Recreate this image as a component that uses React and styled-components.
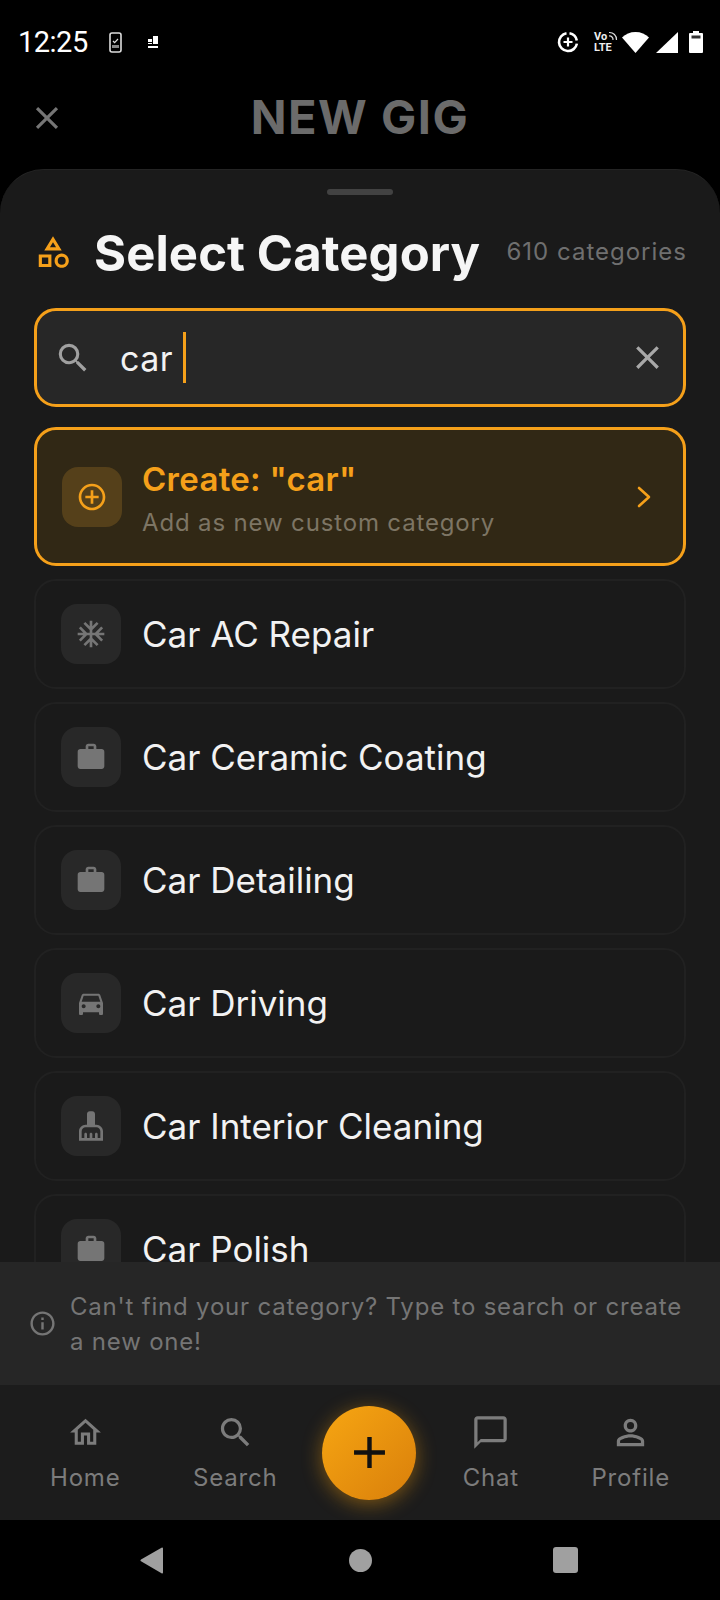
import React from 'react';
import styled, { createGlobalStyle } from 'styled-components';
import {
  MdClose,
  MdSearch,
  MdOutlineCategory,
  MdAddCircleOutline,
  MdAcUnit,
  MdWork,
  MdDirectionsCar,
  MdCleaningServices,
  MdInfoOutline,
  MdOutlineHome,
  MdChatBubbleOutline,
  MdPersonOutline,
  MdAdd,
} from 'react-icons/md';

const GlobalStyle = createGlobalStyle`
  html, body {
    margin: 0;
    padding: 0;
    background: #000;
  }
  * {
    box-sizing: border-box;
  }
`;

const ORANGE = '#f5a01a';

const Screen = styled.div`
  width: 720px;
  height: 1600px;
  display: flex;
  flex-direction: column;
  background: #000;
  font-family: Inter, 'Liberation Sans', sans-serif;
  overflow: hidden;
`;

// Android status bar
const StatusBar = styled.div`
  height: 84px;
  flex: none;
  display: flex;
  align-items: center;
  padding: 0 17px 0 18px;
  color: #fff;
`;

const Clock = styled.span`
  font-family: Roboto, sans-serif;
  font-size: 29px;
  letter-spacing: -0.5px;
  line-height: 29px;
  width: 91px;
`;

const StatusLeft = styled.div`
  display: flex;
  align-items: center;
  gap: 26px;
  flex: 1;
`;

const StatusRight = styled.div`
  display: flex;
  align-items: center;
  gap: 8px;
`;

const VoLte = styled.div`
  width: 24px;
  margin: 0 -4px 0 7px;
  display: flex;
  flex-direction: column;
  font-family: Roboto, sans-serif;
  font-weight: 700;
  font-size: 11px;
  line-height: 11px;
  position: relative;
  color: #eee;
`;

const VoWaves = styled.svg`
  position: absolute;
  right: 0;
  top: 0;
`;

const WifiSlot = styled.span`
  display: flex;
  margin-right: -1px;
`;

const BatterySlot = styled.span`
  display: flex;
  margin-left: 3px;
`;

// Dimmed page header behind the sheet
const Header = styled.div`
  height: 85px;
  flex: none;
  display: flex;
  align-items: center;
  position: relative;
  justify-content: center;
  color: #6b6b6b;
  padding-bottom: 20px;
`;

const HeaderClose = styled.div`
  position: absolute;
  left: 28px;
  top: 15px;
  display: flex;
  color: #757575;
`;

const HeaderTitle = styled.h1`
  margin: 0;
  font-size: 47px;
  font-weight: 700;
  letter-spacing: 1.5px;
  line-height: 56px;
`;

const Sheet = styled.div`
  flex: 1;
  min-height: 0;
  display: flex;
  flex-direction: column;
  background: #1a1a1a;
  border-radius: 44px 44px 0 0;
  border-top: 1px solid #242424;
  overflow: hidden;
`;

const Handle = styled.div`
  width: 66px;
  height: 6px;
  border-radius: 3px;
  background: #424242;
  margin: 19px auto 0;
  flex: none;
`;

const Heading = styled.div`
  flex: none;
  height: 113px;
  padding: 0 33px 0 37px;
  display: flex;
  align-items: center;
`;

const HeadingIcon = styled.span`
  display: flex;
  color: ${ORANGE};
  margin: 0 22px 0 -3px;
`;

const HeadingTitle = styled.h2`
  margin: 4px 0 0;
  flex: 1;
  color: #f5f5f5;
  font-size: 49px;
  font-weight: 700;
  letter-spacing: 0.1px;
  line-height: 56px;
  white-space: nowrap;
`;

const Count = styled.span`
  color: #6f6f6f;
  font-size: 24px;
  letter-spacing: 1px;
  white-space: nowrap;
`;

const SearchBox = styled.div`
  flex: none;
  height: 99px;
  margin: 0 34px;
  padding: 0 16px 0 17px;
  display: flex;
  align-items: center;
  background: #272727;
  border: 3px solid ${ORANGE};
  border-radius: 22px;
  color: #a0a0a0;
`;

const SearchText = styled.span`
  margin: 2px 0 0 28px;
  color: #f2f2f2;
  font-size: 34px;
  letter-spacing: 0.5px;
`;

const Caret = styled.span`
  width: 3px;
  height: 51px;
  margin-left: 10px;
  background: ${ORANGE};
  flex: none;
`;

const SearchClear = styled.span`
  margin-left: auto;
  display: flex;
  color: #a8a8a8;
`;

const List = styled.div`
  flex: 1;
  min-height: 0;
  overflow: hidden;
  padding: 20px 34px 0;
  display: flex;
  flex-direction: column;
  gap: 13px;
`;

const CreateCard = styled.div`
  flex: none;
  height: 139px;
  padding: 0 31px 0 25px;
  display: flex;
  align-items: center;
  background: #312815;
  border: 3px solid ${ORANGE};
  border-radius: 22px;
`;

const IconBox = styled.div`
  width: 60px;
  height: 60px;
  flex: none;
  display: flex;
  align-items: center;
  justify-content: center;
  border-radius: 16px;
  background: ${(p) => (p.$accent ? '#55401a' : '#282828')};
  color: ${(p) => (p.$accent ? ORANGE : '#757575')};
`;

const CreateBody = styled.div`
  flex: 1;
  margin: 3px 0 0 20px;
  display: flex;
  flex-direction: column;
  gap: 8px;
`;

const CreateTitle = styled.span`
  color: ${ORANGE};
  font-size: 33px;
  font-weight: 600;
  letter-spacing: 0.3px;
  line-height: 42px;
`;

const CreateSub = styled.span`
  color: #7d7564;
  font-size: 24px;
  letter-spacing: 0.85px;
  line-height: 30px;
`;

const Row = styled.div`
  flex: none;
  height: 110px;
  padding: 0 25px;
  display: flex;
  align-items: center;
  gap: 21px;
  border: 2px solid #212121;
  border-radius: 22px;
`;

const RowLabel = styled.span`
  color: #f2f2f2;
  font-size: 35px;
  letter-spacing: 0;
  white-space: nowrap;
`;

const HintBanner = styled.div`
  flex: none;
  height: 123px;
  display: flex;
  align-items: center;
  gap: 13px;
  padding: 0 20px 0 28px;
  background: #262626;
  color: #757575;
`;

const HintText = styled.p`
  margin: 0;
  font-size: 24px;
  line-height: 35px;
  letter-spacing: 0.8px;
`;

const HintIcon = styled.span`
  display: flex;
  flex: none;
`;

const BottomNav = styled.nav`
  flex: none;
  height: 135px;
  padding: 0 22px;
  display: flex;
  align-items: center;
  justify-content: space-between;
  background: #1c1c1c;
`;

const NavItem = styled.div`
  padding: 0 28px 1px;
  display: flex;
  flex-direction: column;
  align-items: center;
  color: #7c7c7c;
`;

const NavIcon = styled.span`
  height: 42px;
  display: flex;
  align-items: center;
`;

const NavLabel = styled.span`
  margin-top: 10px;
  font-size: 24px;
  line-height: 30px;
  letter-spacing: 0.8px;
`;

const Fab = styled.div`
  width: 94px;
  height: 94px;
  flex: none;
  margin-right: 2px;
  display: flex;
  align-items: center;
  justify-content: center;
  border-radius: 50%;
  color: #111;
  background: linear-gradient(135deg, #f7a612, #d97f0b);
  box-shadow: 0 4px 20px rgba(245, 158, 11, 0.45);
`;

// Android navigation buttons
const SystemNav = styled.div`
  flex: none;
  height: 80px;
  display: flex;
  align-items: center;
  justify-content: space-between;
  padding: 0 142px 0 140px;
  background: #000;
`;

const HomeDot = styled.span`
  width: 23px;
  height: 23px;
  margin-left: 3px;
  border-radius: 50%;
  background: #a0a0a0;
`;

const RecentsSquare = styled.span`
  width: 25px;
  height: 26px;
  border-radius: 3px;
  background: #a0a0a0;
`;

const PhoneIcon = () => (
  <svg width="13" height="21" viewBox="0 0 13 21">
    <rect x="1" y="1" width="11" height="19" rx="2" fill="none" stroke="#ddd" strokeWidth="1.6" />
    <path d="M4 9l1.6 1.6L9 7" fill="none" stroke="#ddd" strokeWidth="1.2" />
    <path d="M3 13h7v3H3z" fill="#888" />
  </svg>
);

const BlocksIcon = () => (
  <svg width="10" height="12" viewBox="0 0 10 12" fill="#fff">
    <path d="M0 3h4v3H0zM5 0h5v8H5zM0 7h4v1H0zM0 10h10v2H0z" />
  </svg>
);

const SaverIcon = () => (
  <svg width="22" height="22" viewBox="0 0 22 22" fill="none" stroke="#fff" strokeWidth="2.6">
    <path d="M9.5 2.2a9 9 0 1 0 10.4 10.4" />
    <path d="M12.5 2.2a9 9 0 0 1 7.3 7.3" />
    <path d="M11 6.5v9M6.5 11h9" strokeWidth="2.2" />
  </svg>
);

const WifiIcon = () => (
  <svg width="27" height="21" viewBox="0 0 27 21" fill="#fff">
    <path d="M13.5 21L0 5.5C3.5 2 8.2 0 13.5 0S23.5 2 27 5.5z" />
  </svg>
);

const SignalIcon = () => (
  <svg width="22" height="21" viewBox="0 0 22 21" fill="#fff">
    <path d="M22 0v21H0z" />
  </svg>
);

const BatteryIcon = () => (
  <svg width="14" height="22" viewBox="0 0 14 22" fill="#fff">
    <path d="M4 0h6v2h3a1 1 0 0 1 1 1v18a1 1 0 0 1-1 1H1a1 1 0 0 1-1-1V3a1 1 0 0 1 1-1h3z" />
    <path d="M2.5 4.5h9v3h-9z" fill="#333" />
  </svg>
);

const ForwardIcon = () => (
  <svg width="16" height="24" viewBox="0 0 16 24" fill="none" stroke={ORANGE} strokeWidth="2.6" strokeLinecap="round" strokeLinejoin="round">
    <path d="M3 3l10 9-10 9" />
  </svg>
);

const BackTriangle = () => (
  <svg width="24" height="27" viewBox="0 0 24 27" fill="#a0a0a0">
    <path d="M23 1.5v24a1 1 0 0 1-1.5.8L1 14.2a1 1 0 0 1 0-1.6L21.500.7a1 1 0 0 1 1.500.8z" />
  </svg>
);

const rows = [
  { label: 'Car AC Repair', Icon: MdAcUnit },
  { label: 'Car Ceramic Coating', Icon: MdWork },
  { label: 'Car Detailing', Icon: MdWork },
  { label: 'Car Driving', Icon: MdDirectionsCar },
  { label: 'Car Interior Cleaning', Icon: MdCleaningServices },
  { label: 'Car Polish', Icon: MdWork },
];

const navLeft = [
  { label: 'Home', Icon: MdOutlineHome, size: 37 },
  { label: 'Search', Icon: MdSearch, size: 39 },
];

const navRight = [
  { label: 'Chat', Icon: MdChatBubbleOutline, size: 39 },
  { label: 'Profile', Icon: MdPersonOutline, size: 41 },
];

const NavEntry = ({ label, Icon, size }) => (
  <NavItem>
    <NavIcon>
      <Icon size={size} />
    </NavIcon>
    <NavLabel>{label}</NavLabel>
  </NavItem>
);

const App = () => {
  return (
    <Screen>
      <GlobalStyle />
      <StatusBar>
        <Clock>12:25</Clock>
        <StatusLeft>
          <PhoneIcon />
          <BlocksIcon />
        </StatusLeft>
        <StatusRight>
          <SaverIcon />
          <VoLte>
            <span>Vo</span>
            <span>LTE</span>
            <VoWaves width="10" height="10" viewBox="0 0 10 10" fill="none" stroke="#ddd" strokeWidth="1.2">
              <path d="M1 1.500a7 7 0 0 1 7.500 7.500M1 5a3.500 3.500 0 0 1 4 4" />
            </VoWaves>
          </VoLte>
          <WifiSlot>
            <WifiIcon />
          </WifiSlot>
          <SignalIcon />
          <BatterySlot>
            <BatteryIcon />
          </BatterySlot>
        </StatusRight>
      </StatusBar>

      <Header>
        <HeaderClose>
          <MdClose size={38} />
        </HeaderClose>
        <HeaderTitle>NEW GIG</HeaderTitle>
      </Header>

      <Sheet>
        <Handle />
        <Heading>
          <HeadingIcon>
            <MdOutlineCategory size={38} />
          </HeadingIcon>
          <HeadingTitle>Select Category</HeadingTitle>
          <Count>610 categories</Count>
        </Heading>

        <SearchBox>
          <MdSearch size={38} />
          <SearchText>car</SearchText>
          <Caret />
          <SearchClear>
            <MdClose size={39} />
          </SearchClear>
        </SearchBox>

        <List>
          <CreateCard>
            <IconBox $accent>
              <MdAddCircleOutline size={32} />
            </IconBox>
            <CreateBody>
              <CreateTitle>Create: "car"</CreateTitle>
              <CreateSub>Add as new custom category</CreateSub>
            </CreateBody>
            <ForwardIcon />
          </CreateCard>

          {rows.map(({ label, Icon }) => (
            <Row key={label}>
              <IconBox>
                <Icon size={32} />
              </IconBox>
              <RowLabel>{label}</RowLabel>
            </Row>
          ))}
        </List>

        <HintBanner>
          <HintIcon>
            <MdInfoOutline size={29} />
          </HintIcon>
          <HintText>Can't find your category? Type to search or create a new one!</HintText>
        </HintBanner>
      </Sheet>

      <BottomNav>
        {navLeft.map((item) => (
          <NavEntry key={item.label} {...item} />
        ))}
        <Fab>
          <MdAdd size={53} />
        </Fab>
        {navRight.map((item) => (
          <NavEntry key={item.label} {...item} />
        ))}
      </BottomNav>

      <SystemNav>
        <BackTriangle />
        <HomeDot />
        <RecentsSquare />
      </SystemNav>
    </Screen>
  );
};

export default App;
